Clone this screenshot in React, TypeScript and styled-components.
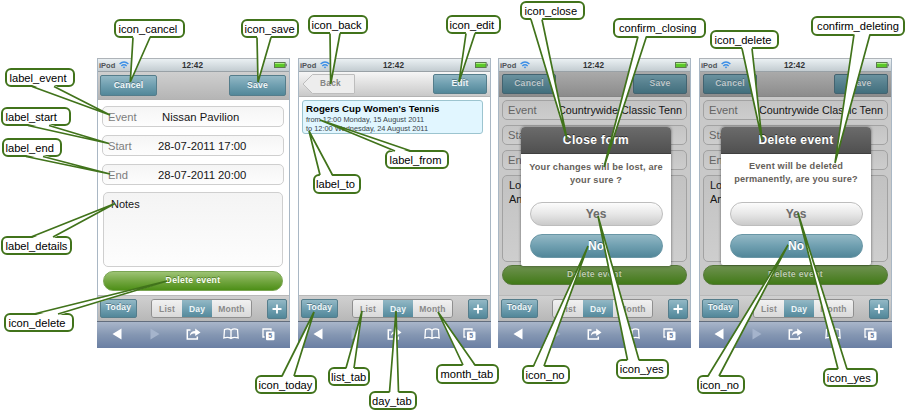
import React from "react";
import styled, { createGlobalStyle, css } from "styled-components";

const GlobalStyle = createGlobalStyle`
  * { box-sizing: border-box; }
  body { margin: 0; background: #fff; font-family: "Liberation Sans", Arial, Helvetica, sans-serif; }
`;

const tealFill = "linear-gradient(#93b8c5, #6f9fb0 50%, #528799)";
const tealDim = "linear-gradient(#6a929f, #557f8d 50%, #426f7d)";

const Page = styled.main`
  position: relative;
  width: 906px;
  height: 410px;
  overflow: hidden;
  padding: 58px 0 0 97px;
`;

const Phones = styled.div`
  display: grid;
  grid-template-columns: 201px 200px 201px 193px;
`;

const Phone = styled.section`
  position: relative;
  width: 193px;
  height: 290px;
  display: flex;
  flex-direction: column;
  border: 1px solid #a9b7c4;
  border-top-color: #aeb3b8;
  border-bottom: 0;
  background: #fff;
`;

const StatusRow = styled.div`
  height: 13px;
  flex: none;
  display: grid;
  grid-template-columns: 83px 1fr auto;
  align-items: center;
  padding: 0 2px 0 1px;
  background: linear-gradient(#eaf0f3, #c3ccd1);
  border-bottom: 1px solid #99a1a6;
  color: #303234;
  font-size: 8px;
  line-height: 11px;
  font-weight: bold;
`;

const Carrier = styled.span`
  display: flex;
  align-items: center;
  gap: 4px;
  font-size: 7.5px;
  color: #505356;
`;

const Clock = styled.span`
  font-size: 8.2px;
`;

const Header = styled.header<{ $tall?: boolean; $tone: "mid" | "light" | "dim" }>`
  height: ${(p) => (p.$tall ? 28 : 25)}px;
  flex: none;
  display: flex;
  justify-content: space-between;
  align-items: flex-start;
  padding: ${(p) => (p.$tall ? "3px 3px 0 2px" : "2px 3px 0 3px")};
  background: ${(p) =>
    p.$tone === "mid"
      ? "linear-gradient(#cfcfcf, #b5b5b5)"
      : p.$tone === "light"
      ? "linear-gradient(#f6f6f6, #c9c9c9)"
      : "linear-gradient(#aaa, #8c8c8c)"};
  border-bottom: 1px solid ${(p) => (p.$tone === "dim" ? "#858585" : "#b3b3b3")};
`;

const HeaderButton = styled.button<{ $w: number; $h?: number; $dim?: boolean }>`
  width: ${(p) => p.$w}px;
  height: ${(p) => p.$h ?? 20}px;
  padding: 0 0 1px;
  border: 1px solid ${(p) => (p.$dim ? "#436370" : "#557d8b")};
  border-radius: 2px;
  background: ${(p) => (p.$dim ? tealDim : tealFill)};
  color: ${(p) => (p.$dim ? "#bfc7ca" : "#f3f8f9")};
  font: bold 8.6px/1 "Liberation Sans", Arial, sans-serif;
  letter-spacing: 0.25px;
  text-shadow: 0 -1px 0 rgba(30, 60, 75, 0.45);
`;

const BackButton = styled.button`
  display: grid;
  grid-template-areas: "stack";
  place-items: center;
  width: 53px;
  height: 20px;
  padding: 0;
  border: 0;
  background: none;
  color: #858585;
  font: bold 8.3px/1 "Liberation Sans", Arial, sans-serif;
  letter-spacing: 0.25px;
  & > * { grid-area: stack; }
  & > span { padding: 0 0 1px 4px; }
`;

const Content = styled.div<{ $dim?: boolean; $tall?: boolean }>`
  flex: 1;
  min-height: 0;
  display: flex;
  flex-direction: column;
  background: ${(p) => (p.$dim ? "#c9c9c9" : "#fff")};
  ${(p) =>
    p.$dim
      ? css`padding: 3px 3px 0 3px; gap: 5px;`
      : p.$tall
      ? css`padding: 6px 5px 0 4px; gap: 8px;`
      : css`padding: 3px 7px 0 3px;`}
`;

const Field = styled.div<{ $dim?: boolean; $inset?: number }>`
  height: ${(p) => (p.$dim ? 20 : 21)}px;
  flex: none;
  display: grid;
  grid-template-columns: ${(p) => p.$inset ?? 50}px 1fr;
  align-items: center;
  padding-left: 5px;
  overflow: hidden;
  white-space: nowrap;
  border: 1px solid ${(p) => (p.$dim ? "#a2a2a2" : "#cfcfcf")};
  border-radius: 5px;
  background: ${(p) => (p.$dim ? "linear-gradient(#c4c4c4, #cdcdcd)" : "linear-gradient(#f5f5f5, #fdfdfd)")};
  font-size: ${(p) => (p.$dim ? 10.8 : 11.3)}px;
  color: #161616;
`;

const FieldName = styled.span<{ $dim?: boolean }>`
  font-size: 11.2px;
  color: ${(p) => (p.$dim ? "#646464" : "#7d7d7d")};
`;

const Notes = styled.div<{ $dim?: boolean }>`
  height: ${(p) => (p.$dim ? 87 : 75)}px;
  flex: none;
  margin: ${(p) => (p.$dim ? "0" : "-1px 1px 0")};
  padding: ${(p) => (p.$dim ? "2px 6px" : "5px 7px")};
  border: 1px solid ${(p) => (p.$dim ? "#a2a2a2" : "#cfcfcf")};
  border-radius: 5px;
  background: ${(p) => (p.$dim ? "linear-gradient(#c2c2c2, #cecece)" : "linear-gradient(#f4f4f4, #fdfdfd)")};
  font-size: 11px;
  line-height: ${(p) => (p.$dim ? 14 : 12)}px;
  color: #161616;
`;

const DeleteButton = styled.button<{ $dim?: boolean }>`
  height: 20px;
  flex: none;
  margin: ${(p) => (p.$dim ? "-2px 0 0" : "-4px 1px 0")};
  padding: 0 0 1px;
  border: 1px solid ${(p) => (p.$dim ? "#56783a" : "#7aa553")};
  border-radius: 10px;
  background: ${(p) => (p.$dim ? "linear-gradient(#6e9150, #427a18)" : "linear-gradient(#9dc374, #73a641 50%, #4d8f17)")};
  color: ${(p) => (p.$dim ? "#bccbb0" : "#fbfff6")};
  font: bold 8.6px/1 "Liberation Sans", Arial, sans-serif;
  letter-spacing: 0.35px;
  text-shadow: 0 -1px 0 rgba(40, 70, 10, 0.5);
`;

const EventCard = styled.article`
  height: 34px;
  padding: 3px 3px 0;
  border: 1px solid #9cc4cf;
  border-radius: 3px;
  background: #e1f6ff;
  color: #38444a;
  font-size: 7.4px;
  line-height: 9px;
  white-space: nowrap;
`;

const EventTitle = styled.h2`
  margin: 0 0 1px;
  color: #000;
  font-size: 9.7px;
  line-height: 10px;
`;

const Toolbar = styled.div`
  height: 26px;
  flex: none;
  display: flex;
  align-items: center;
  padding: 0 2px;
  background: linear-gradient(#d0d0d0, #b7b7b7);
  border-top: 1px solid #b9b9b9;
`;

const TodayButton = styled(HeaderButton)`
  height: 19px;
  padding: 0 0 3px;
  font-size: 8.5px;
`;

const Segments = styled.div`
  display: grid;
  grid-template-columns: 30px 30px 39px;
  height: 19px;
  margin: 0 15px 0 14px;
  border: 1px solid #8f8f8f;
  border-radius: 3px;
  overflow: hidden;
  font-size: 8.5px;
  font-weight: bold;
  letter-spacing: 0.2px;
  line-height: 18px;
  text-align: center;
`;

const Segment = styled.span<{ $on?: boolean }>`
  background: ${(p) => (p.$on ? tealFill : "linear-gradient(#f1f1f1, #d8d8d8)")};
  color: ${(p) => (p.$on ? "#eef5f7" : "#8a8a8a")};
`;

const AddButton = styled(HeaderButton)`
  display: grid;
  place-items: center;
  height: 20px;
  padding: 0;
`;

const NavBar = styled.nav`
  height: 27px;
  flex: none;
  display: grid;
  grid-template-columns: 39px 38px 38px 37px 39px;
  place-items: center;
  margin: 0 -1px;
  padding-bottom: 2px;
  background: linear-gradient(#a9b6ca, #8496b2 50%, #6a7fa3);
  border-top: 1px solid #626d7d;
`;

const Dialog = styled.div<{ $top: number; $left: number; $height: number }>`
  position: absolute;
  top: ${(p) => p.$top}px;
  left: ${(p) => p.$left}px;
  width: 150px;
  height: ${(p) => p.$height}px;
  display: flex;
  flex-direction: column;
  border-radius: 4px 4px 2px 2px;
  background: #fff;
  box-shadow: 0 0 3px rgba(0, 0, 0, 0.55);
  overflow: hidden;
`;

const DialogTitle = styled.h3`
  margin: 0;
  height: 27px;
  flex: none;
  background: linear-gradient(#6b6b6b, #505050);
  border-bottom: 1px solid #3f3f3f;
  color: #fff;
  font-size: 12px;
  line-height: 27px;
  letter-spacing: 0.36px;
  text-align: center;
  text-shadow: 0 -1px 0 #333;
`;

const DialogText = styled.p<{ $gap: number }>`
  margin: 0;
  height: 48px;
  flex: none;
  padding-top: ${(p) => p.$gap}px;
  color: #66615a;
  font-size: 9.2px;
  font-weight: bold;
  line-height: 12.5px;
  letter-spacing: 0.17px;
  text-align: center;
  white-space: pre-line;
`;

const Choice = styled.button<{ $main?: boolean }>`
  height: 24px;
  flex: none;
  margin: 0 8.5px 8px;
  padding: 0 0 1px;
  border: 1px solid ${(p) => (p.$main ? "#6996a5" : "#bdbdbd")};
  border-radius: 12px;
  background: ${(p) => (p.$main ? tealFill : "linear-gradient(#fcfcfc, #e7e7e7 50%, #cacaca)")};
  color: ${(p) => (p.$main ? "#fff" : "#6c6c6c")};
  font: bold 12px/1 "Liberation Sans", Arial, sans-serif;
  text-shadow: ${(p) => (p.$main ? "0 -1px 0 #34677a" : "none")};
`;

const Tails = styled.svg`
  position: absolute;
  inset: 0;
  pointer-events: none;
`;

const Tag = styled.span<{ $x: number; $y: number; $w: number; $pad: number }>`
  position: absolute;
  left: ${(p) => p.$x}px;
  top: ${(p) => p.$y}px;
  width: ${(p) => p.$w}px;
  height: 19.5px;
  padding-left: ${(p) => p.$pad - 1.5}px;
  border: 2px solid #41731b;
  border-radius: 6px;
  background: #fff;
  color: #000;
  font-size: 11.15px;
  line-height: 16px;
  white-space: nowrap;
`;

const Wifi = () => (
  <svg width="10" height="8" viewBox="0 0 10 8" fill="none" stroke="#3b8ee6" strokeWidth="1.4">
    <path d="M.6 3.1Q5-.9 9.4 3.1M2.3 4.9Q5 2.5 7.7 4.9" />
    <path d="M3.7 6.1 5 7.5 6.3 6.1Q5 5 3.7 6.1Z" fill="#3b8ee6" stroke="none" />
  </svg>
);

const Battery = () => (
  <svg width="13" height="6" viewBox="0 0 13 6">
    <rect x=".5" y=".5" width="10.6" height="5" fill="#5cc929" stroke="#5c7a50" />
    <path d="M1 1.5h9.6" stroke="#a9ec80" />
    <path d="M12.2 1.8v2.4" stroke="#687568" strokeWidth="1.2" />
  </svg>
);

const Status = () => (
  <StatusRow>
    <Carrier>iPod <Wifi /></Carrier>
    <Clock>12:42</Clock>
    <Battery />
  </StatusRow>
);

const Bottom = () => (
  <>
    <Toolbar>
      <TodayButton $w={37}>Today</TodayButton>
      <Segments>
        <Segment>List</Segment>
        <Segment $on>Day</Segment>
        <Segment>Month</Segment>
      </Segments>
      <AddButton $w={20} aria-label="Add">
        <svg width="10" height="10" viewBox="0 0 10 10" stroke="#fff" strokeWidth="1.8"><path d="M5 .5v9M.5 5h9" /></svg>
      </AddButton>
    </Toolbar>
    <NavBar>
      <svg width="10" height="12" viewBox="0 0 10 12"><path d="M9.5.5v11L.5 6Z" fill="#fff" /></svg>
      <svg width="10" height="12" viewBox="0 0 10 12"><path d="M.5.5v11l9-5.5Z" fill="#a5b4cc" /></svg>
      <svg width="15" height="12" viewBox="0 0 15 12" fill="none">
        <path d="M4.5 2H1.3v9h10V8.5" stroke="#fff" strokeWidth="1.5" />
        <path d="M3.8 8C4 4.6 6 3 9.2 3V.4L14.5 4.5 9.2 8V5.6C6.8 5.5 5 6 3.8 8Z" fill="#fff" />
      </svg>
      <svg width="16" height="12" viewBox="0 0 16 12" fill="none" stroke="#fff" strokeWidth="1.3">
        <path d="M8 2.2C6.2.8 3.3.7 1.5 1.5L.9 10C3.5 9 6 9.2 8 10.4 10 9.2 12.5 9 15.1 10l-.6-8.5C12.7.7 9.8.8 8 2.2ZM8 2.2v8.2" />
      </svg>
      <svg width="13" height="13" viewBox="0 0 13 13">
        <path d="M2.6 9H1V1h8v1.5" fill="none" stroke="#fff" strokeWidth="1.3" />
        <rect x="4" y="3.6" width="8.5" height="8.6" rx="1" fill="#fff" />
        <text x="8.3" y="10.4" textAnchor="middle" fontSize="7" fontWeight="bold" fill="#6b7da0">5</text>
      </svg>
    </NavBar>
  </>
);

const Confirm = ({ title, text, left, gap, height }: { title: string; text: string; left: number; gap: number; height: number }) => (
  <Phone>
    <Status />
    <Header $tone="dim">
      <HeaderButton $w={54} $dim>Cancel</HeaderButton>
      <HeaderButton $w={54} $dim>Save</HeaderButton>
    </Header>
    <Content $dim>
      <Field $dim><FieldName $dim>Event</FieldName>Countrywide Classic Tenn</Field>
      <Field $dim><FieldName $dim>Start</FieldName></Field>
      <Field $dim><FieldName $dim>End</FieldName></Field>
      <Notes $dim>Lo<br />An</Notes>
      <DeleteButton $dim>Delete event</DeleteButton>
    </Content>
    <Bottom />
    <Dialog $top={68} $left={left} $height={height}>
      <DialogTitle>{title}</DialogTitle>
      <DialogText $gap={gap}>{text}</DialogText>
      <Choice>Yes</Choice>
      <Choice $main>No</Choice>
    </Dialog>
  </Phone>
);

type Callout = { t: string; box: [number, number, number]; pad: number; from: [number, number]; tip: [number, number]; up?: boolean };

// box: left, top, width; from: the two x values where the tail leaves the box.
const callouts: Callout[] = [
  { t: "icon_cancel", box: [113.5, 18.5, 71], pad: 4.5, from: [133, 150], tip: [130.3, 82] },
  { t: "icon_save", box: [240.5, 18.5, 58.5], pad: 3.5, from: [257, 271], tip: [258, 82] },
  { t: "label_event", box: [4.5, 67.7, 70], pad: 4.5, from: [32, 54], tip: [110, 115] },
  { t: "label_start", box: [1, 106.7, 69.5], pad: 4, from: [28, 49], tip: [109, 143.5] },
  { t: "label_end", box: [1.5, 137.7, 60], pad: 3.5, from: [26, 43], tip: [110, 174] },
  { t: "label_details", box: [1, 235.7, 71], pad: 4, from: [31, 53], tip: [115, 203.5], up: true },
  { t: "icon_delete", box: [3.7, 312.5, 70.5], pad: 4.3, from: [34, 58], tip: [167, 281], up: true },
  { t: "icon_back", box: [308, 14.7, 59.5], pad: 3, from: [330, 340], tip: [330.7, 84] },
  { t: "icon_edit", box: [445.5, 14.5, 55.5], pad: 3.5, from: [466, 475], tip: [459, 82] },
  { t: "label_from", box: [384.5, 149.5, 64], pad: 4.5, from: [395, 411], tip: [320, 120], up: true },
  { t: "label_to", box: [312.5, 174.3, 48.5], pad: 3, from: [320, 332.5], tip: [309, 131], up: true },
  { t: "icon_today", box: [254.5, 374.5, 62.5], pad: 3.5, from: [282, 294], tip: [314, 312], up: true },
  { t: "list_tab", box: [327.5, 366.5, 42], pad: 3, from: [346, 354], tip: [362, 311], up: true },
  { t: "day_tab", box: [368.5, 390.5, 48.5], pad: 3, from: [389.5, 398.5], tip: [396, 311], up: true },
  { t: "month_tab", box: [436, 364, 62.5], pad: 4, from: [463, 475], tip: [438, 312], up: true },
  { t: "icon_close", box: [519.5, 0.5, 65], pad: 4.5, from: [531, 542], tip: [567, 139] },
  { t: "confirm_closing", box: [612.5, 18, 93], pad: 6, from: [638, 646.5], tip: [604, 167] },
  { t: "icon_no", box: [522, 364.8, 47.5], pad: 3, from: [533.5, 544], tip: [588, 246], up: true },
  { t: "icon_yes", box: [615.5, 359.3, 53.5], pad: 3.7, from: [627.5, 639], tip: [598, 216], up: true },
  { t: "icon_delete", box: [709.5, 29.7, 69], pad: 4.5, from: [742, 752], tip: [762, 140] },
  { t: "confirm_deleting", box: [811.3, 16.3, 94], pad: 5.3, from: [854, 870], tip: [835, 163] },
  { t: "icon_no", box: [697, 374.6, 47.5], pad: 2.5, from: [708, 719], tip: [788, 245], up: true },
  { t: "icon_yes", box: [823, 367.5, 54.5], pad: 3.3, from: [838, 847], tip: [798, 213], up: true },
];

const tailPath = (c: Callout) => {
  const y = Math.round(c.box[1]) + (c.up ? 1 : 18.5);
  return `M${c.from[0]} ${y}L${c.tip[0]} ${c.tip[1]}L${c.from[1]} ${y}`;
};

const tailMouth = (c: Callout) => {
  const y = Math.round(c.box[1]) + (c.up ? 2.5 : 17);
  return `M${c.from[0]} ${y}L${c.tip[0]} ${c.tip[1]}L${c.from[1]} ${y}Z`;
};

export default function App() {
  return (
    <Page>
      <GlobalStyle />
      <Phones>
        <Phone>
          <Status />
          <Header $tone="mid" $tall>
            <HeaderButton $w={57} $h={21}>Cancel</HeaderButton>
            <HeaderButton $w={57} $h={21}>Save</HeaderButton>
          </Header>
          <Content $tall>
            <Field $inset={54}><FieldName>Event</FieldName>Nissan Pavilion</Field>
            <Field><FieldName>Start</FieldName>28-07-2011 17:00</Field>
            <Field><FieldName>End</FieldName>28-07-2011 20:00</Field>
            <Notes>Notes</Notes>
            <DeleteButton>Delete event</DeleteButton>
          </Content>
          <Bottom />
        </Phone>
        <Phone>
          <Status />
          <Header $tone="light">
            <BackButton>
              <svg width="53" height="20" viewBox="0 0 53 20">
                <path d="M10.5.5H52q.5 0 .5.5v18q0 .5-.5.5H10.5L1 10Z" fill="#ededed" stroke="#bdbdbd" />
              </svg>
              <span>Back</span>
            </BackButton>
            <HeaderButton $w={54}>Edit</HeaderButton>
          </Header>
          <Content>
            <EventCard>
              <EventTitle>Rogers Cup Women's Tennis</EventTitle>
              <div>from 12:00 Monday, 15 August 2011</div>
              <div>to 12:00 Wednesday, 24 August 2011</div>
            </EventCard>
          </Content>
          <Bottom />
        </Phone>
        <Confirm title="Close form" text={"Your changes will be lost, are\nyour sure ?"} left={22} gap={7} height={139} />
        <Confirm title="Delete event" text={"Event will be deleted\npermanently, are you sure?"} left={21} gap={6} height={138} />
      </Phones>
      {callouts.map((c, i) => (
        <Tag key={i} $x={c.box[0]} $y={c.box[1]} $w={c.box[2]} $pad={c.pad}>{c.t}</Tag>
      ))}
      <Tails width="906" height="410" viewBox="0 0 906 410">
        {callouts.map((c, i) => (
          <g key={i}>
            <path d={tailMouth(c)} fill="#fff" />
            <path d={tailPath(c)} fill="none" stroke="#41731b" strokeWidth="1.7" strokeLinejoin="bevel" />
          </g>
        ))}
      </Tails>
    </Page>
  );
}
